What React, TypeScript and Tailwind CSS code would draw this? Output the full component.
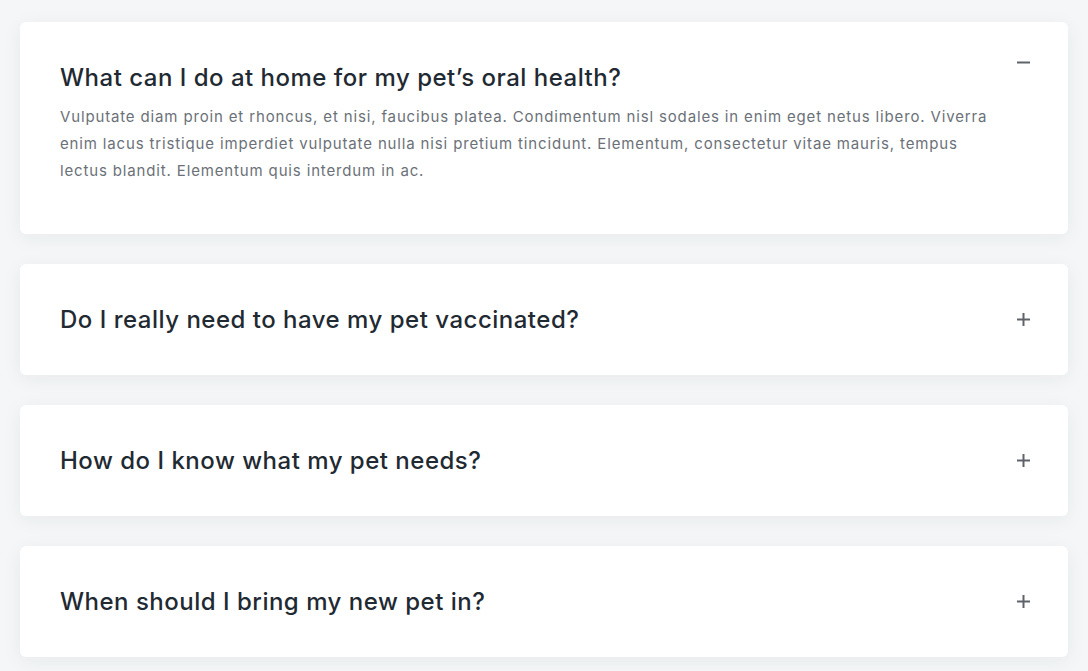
const faqs = [
  {
    q: 'What can I do at home for my pet’s oral health?',
    a: 'Vulputate diam proin et rhoncus, et nisi, faucibus platea. Condimentum nisl sodales in enim eget netus libero. Viverra enim lacus tristique imperdiet vulputate nulla nisi pretium tincidunt. Elementum, consectetur vitae mauris, tempus lectus blandit. Elementum quis interdum in ac.',
    open: true,
  },
  { q: 'Do I really need to have my pet vaccinated?', a: '', open: false },
  { q: 'How do I know what my pet needs?', a: '', open: false },
  { q: 'When should I bring my new pet in?', a: '', open: false },
];

function ToggleIcon({ open }: { open: boolean }) {
  return (
    <svg width="13" height="13" viewBox="0 0 13 13" className="text-[#5f6368]">
      <path d="M0 6.5h13" stroke="currentColor" strokeWidth="2" />
      {!open && <path d="M6.5 0v13" stroke="currentColor" strokeWidth="2" />}
    </svg>
  );
}

export default function App() {
  return (
    <main className="min-h-screen bg-[#f4f6f7] px-5 pt-[22px] pb-10 font-['Inter',sans-serif]">
      <div className="flex flex-col gap-[30px]">
        {faqs.map((f) => (
          <div
            key={f.q}
            className={`bg-white rounded-md shadow-[0_4px_20px_rgba(30,50,60,0.06)] px-10 pt-10 ${f.open ? 'pb-[50px]' : 'pb-10'}`}
          >
            <div className="flex items-start justify-between">
              <h3 className="text-[24px] leading-[31px] font-medium text-[#1f2a33] tracking-[0.5px]">{f.q}</h3>
              <div className={`mr-[-2px] ${f.open ? 'mt-[-6px]' : 'mt-[9px]'}`}>
                <ToggleIcon open={f.open} />
              </div>
            </div>
            {f.open && (
              <p className="mt-[10px] max-w-[940px] text-[15px] leading-[27px] text-[#6b7178] tracking-[0.85px]">
                {f.a}
              </p>
            )}
          </div>
        ))}
      </div>
    </main>
  );
}
